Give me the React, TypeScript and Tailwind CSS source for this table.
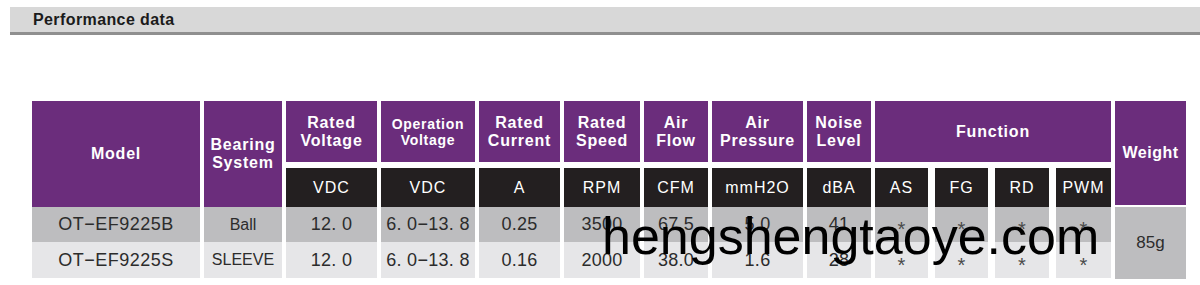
const font = { fontFamily: '"Liberation Sans", Arial, Helvetica, sans-serif' };

const mid = [
  { title: ["Rated", "Voltage"], unit: "VDC", col: "col-start-3", rows: ["12. 0", "12. 0"] },
  { title: ["Operation", "Voltage"], unit: "VDC", col: "col-start-4", rows: ["6. 0−13. 8", "6. 0−13. 8"], small: true },
  { title: ["Rated", "Current"], unit: "A", col: "col-start-5", rows: ["0.25", "0.16"] },
  { title: ["Rated", "Speed"], unit: "RPM", col: "col-start-6", rows: ["3500", "2000"] },
  { title: ["Air", "Flow"], unit: "CFM", col: "col-start-7", rows: ["67.5", "38.0"] },
  { title: ["Air", "Pressure"], unit: "mmH2O", col: "col-start-8", rows: ["5.0", "1.6"] },
  { title: ["Noise", "Level"], unit: "dBA", col: "col-start-9", rows: ["41", "28"] },
];

const functions = ["AS", "FG", "RD", "PWM"];

const rowBg = ["bg-[#bdbdbf]", "bg-[#e6e6e8]"];
const rowStart = ["row-start-3", "row-start-4"];

export default function App() {
  return (
    <div className="relative w-[1200px] h-[285px] bg-white overflow-hidden" style={font}>
      <div className="mt-[7px] ml-[10px] h-[28px] bg-[#d8d8d8] border-b-[3px] border-[#8f8f8f] flex items-center pl-[23px]">
        <h2 className="text-[16px] font-bold text-[#1b1b1b] leading-none tracking-[0.4px]">Performance data</h2>
      </div>

      <div className="mt-[66px] ml-[32px] grid grid-cols-[168px_78px_91px_94px_81px_76px_64px_91px_64px_236px_71px] grid-rows-[67px_39px_35px_36px] gap-x-[4px] text-white">
        <div className="col-start-1 row-start-1 row-span-2 bg-[#6b2d7c] flex items-center justify-center text-[16px] font-bold tracking-[0.8px]">
          Model
        </div>
        <div className="col-start-2 row-start-1 row-span-2 bg-[#6b2d7c] flex flex-col items-center justify-center text-[16px] font-bold tracking-[0.8px] leading-[18px]">
          <span>Bearing</span>
          <span>System</span>
        </div>

        {mid.map((c) => (
          <div
            key={c.col}
            className={`${c.col} row-start-1 h-[61px] bg-[#6b2d7c] flex flex-col items-center justify-center font-bold ${
              c.small ? "text-[14px] leading-[16px] tracking-[0.7px]" : "text-[16px] leading-[18px] tracking-[0.8px]"
            }`}
          >
            <span>{c.title[0]}</span>
            <span>{c.title[1]}</span>
          </div>
        ))}

        <div className="col-start-10 row-start-1 h-[61px] bg-[#6b2d7c] flex items-center justify-center text-[16px] font-bold tracking-[0.8px]">
          Function
        </div>
        <div className="col-start-11 row-start-1 row-span-2 h-[104px] bg-[#6b2d7c] flex items-center justify-center text-[16px] font-bold tracking-[0.5px]">
          Weight
        </div>

        {mid.map((c) => (
          <div key={c.col + "u"} className={`${c.col} row-start-2 bg-[#231f20] flex items-center justify-center text-[16px] tracking-[1px]`}>
            {c.unit}
          </div>
        ))}

        {["OT−EF9225B", "OT−EF9225S"].map((m, i) => (
          <div key={m} className={`col-start-1 ${rowStart[i]} ${rowBg[i]} flex items-center justify-center text-[18px] tracking-[0.5px] text-[#2c2c2c]`}>
            {m}
          </div>
        ))}
        {["Ball", "SLEEVE"].map((b, i) => (
          <div key={b} className={`col-start-2 ${rowStart[i]} ${rowBg[i]} flex items-center justify-center text-[16px] text-[#2c2c2c]`}>
            {b}
          </div>
        ))}

        {mid.map((c) =>
          c.rows.map((v, i) => (
            <div key={c.col + i} className={`${c.col} ${rowStart[i]} ${rowBg[i]} flex items-center justify-center text-[18px] tracking-[0.3px] text-[#2c2c2c]`}>
              {v}
            </div>
          ))
        )}

        <div className="col-start-10 row-start-2 row-span-3 grid grid-cols-[53px_53px_54px_55px] grid-rows-[39px_35px_36px] gap-x-[7px]">
          {functions.map((f) => (
            <div key={f} className="row-start-1 bg-[#231f20] flex items-center justify-center text-[16px] tracking-[1px]">
              {f}
            </div>
          ))}
          {[0, 1].map((i) =>
            functions.map((f) => (
              <div key={f + i} className={`${i === 0 ? "row-start-2" : "row-start-3"} ${rowBg[i]} flex items-center justify-center text-[20px] leading-[20px] text-[#4a4a4a] pt-[9px]`}>
                *
              </div>
            ))
          )}
        </div>

        <div className="col-start-11 row-start-3 row-span-2 h-[72px] bg-[#bdbdbf] flex items-center justify-center text-[17px] text-[#2c2c2c]">
          85g
        </div>
      </div>

      <div className="absolute left-[602px] top-[210px] text-[52px] leading-none text-black whitespace-nowrap">
        hengshengtaoye.com
      </div>
    </div>
  );
}
